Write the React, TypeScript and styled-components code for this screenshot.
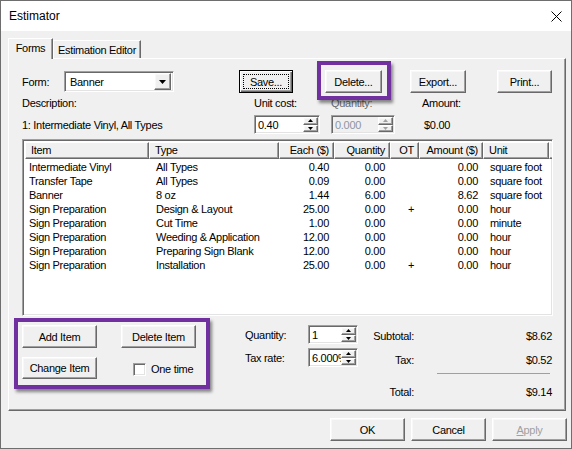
import React from 'react';
import styled, { createGlobalStyle, css } from 'styled-components';

const FONT = `"Liberation Sans", Arial, sans-serif`;

const Global = createGlobalStyle`
  html, body { margin: 0; padding: 0; background: #fff; }
  body { font-family: ${FONT}; font-size: 11px; letter-spacing: -0.3px; color: #000; }
  * { box-sizing: border-box; }
`;

const raised = css`
  border: 1px solid;
  border-color: #fff #696969 #696969 #fff;
  box-shadow: inset -1px -1px 0 #a0a0a0, inset 1px 1px 0 #f8f8f8;
`;

const sunken = css`
  border: 1px solid;
  border-color: #a0a0a0 #fff #fff #a0a0a0;
  box-shadow: inset 1px 1px 0 #696969, inset -1px -1px 0 #e3e3e3;
`;

const Window = styled.div`
  width: 572px;
  height: 449px;
  border: 1px solid #6e6e6e;
  background: #f0f0f0;
  display: flex;
  flex-direction: column;
  overflow: hidden;
`;

const TitleBar = styled.div`
  height: 30px;
  flex: none;
  background: #fff;
  display: flex;
  align-items: center;
  padding: 0 9px 0 8px;
  font-size: 12px;
  letter-spacing: 0;
`;

const Title = styled.span`
  flex: 1;
`;

const Body = styled.div`
  flex: 1;
  display: flex;
  flex-direction: column;
  padding: 7px 4px 0 7px;
`;

const TabStrip = styled.div`
  display: flex;
  height: 21px;
  margin-bottom: -1px;
  position: relative;
  z-index: 1;
`;

const Tab = styled.div<{ $active?: boolean; $w: number }>`
  width: ${(p) => p.$w}px;
  height: ${(p) => (p.$active ? 21 : 18)}px;
  margin-top: ${(p) => (p.$active ? 0 : 2)}px;
  border: 1px solid;
  border-bottom: none;
  border-color: #fff #696969 transparent #fff;
  box-shadow: inset -1px 0 0 #a0a0a0;
  background: #f0f0f0;
  display: flex;
  align-items: center;
  justify-content: center;
  padding-bottom: ${(p) => (p.$active ? 3 : 0)}px;
`;

const Panel = styled.div`
  height: 353px;
  margin-right: 1px;
  border: 1px solid;
  border-color: #fff #696969 #696969 #fff;
  box-shadow: inset -1px -1px 0 #a0a0a0;
  padding: 11px 11px 0 13px;
  display: flex;
  flex-direction: column;
`;

const TopRow = styled.div`
  display: flex;
  align-items: center;
  height: 23px;
`;

const Label = styled.span<{ $w?: number; $disabled?: boolean; $right?: boolean }>`
  ${(p) => (p.$w ? `width: ${p.$w}px; flex: none;` : '')}
  color: ${(p) => (p.$disabled ? '#6d6d6d' : '#000')};
  text-align: ${(p) => (p.$right ? 'right' : 'left')};
  white-space: nowrap;
`;

const Combo = styled.div`
  width: 110px;
  height: 21px;
  flex: none;
  background: #fff;
  ${sunken};
  display: flex;
  align-items: center;
  padding: 2px 2px 2px 5px;
`;

const ComboText = styled.span`
  flex: 1;
`;

const ComboArrow = styled.div`
  width: 17px;
  height: 17px;
  background: #f0f0f0;
  ${raised};
  display: flex;
  align-items: center;
  justify-content: center;
`;

const Annotated = styled.div<{ $ml?: number; $box: string }>`
  position: relative;
  margin-left: ${(p) => p.$ml ?? 0}px;
  flex: none;
  align-self: flex-start;
  &::after {
    content: '';
    position: absolute;
    inset: ${(p) => p.$box};
    border: 4px solid #7030a0;
    box-shadow: 2px 3px 3px rgba(0, 0, 0, 0.45);
    z-index: 3;
    pointer-events: none;
  }
`;

const Button = styled.button<{ $w: number; $h?: number; $ml?: number; $focused?: boolean; $disabled?: boolean }>`
  width: ${(p) => p.$w}px;
  height: ${(p) => p.$h ?? 23}px;
  margin-left: ${(p) => p.$ml ?? 0}px;
  flex: none;
  background: #f0f0f0;
  font-family: ${FONT};
  font-size: 11px;
  letter-spacing: -0.3px;
  color: ${(p) => (p.$disabled ? '#a0a0a0' : '#000')};
  padding: 0;
  position: relative;
  ${raised};
  ${(p) =>
    p.$focused &&
    css`
      border-color: #000;
      box-shadow: inset 1px 1px 0 #fff, inset -1px -1px 0 #696969, inset -2px -2px 0 #a0a0a0;
      &::before {
        content: '';
        position: absolute;
        inset: 3px;
        border: 1px dotted #000;
      }
    `}
`;

const InfoGrid = styled.div`
  display: grid;
  grid-template-columns: 232px 77px 91px 1fr;
  grid-template-rows: 14px 19px;
  row-gap: 5px;
  margin-top: 3px;
  align-items: center;
`;

const SpinBox = styled.div<{ $w: number; $disabled?: boolean }>`
  width: ${(p) => p.$w}px;
  height: 19px;
  background: ${(p) => (p.$disabled ? '#f0f0f0' : '#fff')};
  color: ${(p) => (p.$disabled ? '#8d96a3' : '#000')};
  ${sunken};
  display: flex;
  align-items: center;
  padding: 2px 1px 2px 3px;
  overflow: hidden;
`;

const SpinText = styled.span`
  flex: 1;
  overflow: hidden;
  white-space: nowrap;
`;

const SpinButtons = styled.div`
  width: 15px;
  height: 15px;
  display: flex;
  flex-direction: column;
  flex: none;
`;

const SpinBtn = styled.div`
  flex: 1;
  background: #f0f0f0;
  ${raised};
  display: flex;
  align-items: center;
  justify-content: center;
`;

const Amount = styled.span`
  padding-left: 2px;
`;

const List = styled.div`
  margin-top: 5px;
  width: 531px;
  height: 177px;
  background: #fff;
  ${sunken};
  padding: 2px;
  overflow: hidden;
`;

const COLS = '124px 130px 55px 56px 29px 64px 66px 1fr';

const HeaderRow = styled.div`
  display: grid;
  grid-template-columns: ${COLS};
  height: 17px;
`;

const HeaderCell = styled.div<{ $right?: boolean }>`
  background: #f0f0f0;
  border: 1px solid;
  border-color: #fff #696969 #696969 #fff;
  box-shadow: inset -1px -1px 0 #a0a0a0;
  display: flex;
  align-items: center;
  justify-content: ${(p) => (p.$right ? 'flex-end' : 'flex-start')};
  padding: 0 4px 1px 5px;
  white-space: nowrap;
  overflow: hidden;
`;

const Rows = styled.div`
  padding-top: 1px;
`;

const DataRow = styled.div`
  display: grid;
  grid-template-columns: ${COLS};
  height: 14px;
  line-height: 14px;
`;

const Cell = styled.div<{ $right?: boolean; $first?: boolean }>`
  text-align: ${(p) => (p.$right ? 'right' : 'left')};
  padding: ${(p) => (p.$right ? '0 5px 0 0' : p.$first ? '0 0 0 4px' : '0 0 0 7px')};
  white-space: nowrap;
  overflow: hidden;
`;

const BottomArea = styled.div`
  display: flex;
  align-items: flex-start;
  padding-top: 9px;
`;

const ItemButtons = styled.div`
  display: grid;
  grid-template-columns: 75px 75px;
  grid-template-rows: 23px 22px;
  column-gap: 24px;
  row-gap: 9px;
`;

const CheckRow = styled.label`
  display: flex;
  align-items: center;
  gap: 5px;
  padding-left: 12px;
  padding-top: 2px;
`;

const CheckBox = styled.span`
  width: 13px;
  height: 13px;
  background: #fff;
  ${sunken};
`;

const QtyGrid = styled.div`
  margin-left: 49px;
  display: grid;
  grid-template-columns: 63px 50px;
  grid-template-rows: 19px 19px;
  row-gap: 4px;
  align-items: center;
`;

const Totals = styled.div`
  margin-left: 7px;
  width: 187px;
  display: grid;
  grid-template-columns: 49px 1fr;
  grid-template-rows: 22px 26px 1px 35px;
  align-items: center;
`;

const TotalValue = styled.span`
  text-align: right;
`;

const Separator = styled.div`
  grid-column: 2;
  height: 1px;
  background: #a0a0a0;
  margin: 0 2px 0 23px;
`;

const Footer = styled.div`
  display: flex;
  justify-content: flex-end;
  gap: 6px;
  padding-top: 7px;
`;

const Underline = styled.span`
  text-decoration: underline;
`;

const TriDown = ({ w = 7, h = 4 }: { w?: number; h?: number }) => (
  <svg width={w} height={h} viewBox={`0 0 ${w} ${h}`}>
    <polygon points={`0,0 ${w},0 ${w / 2},${h}`} fill="#000" />
  </svg>
);

const TriUp = ({ w = 5, h = 3, color = '#000' }: { w?: number; h?: number; color?: string }) => (
  <svg width={w} height={h} viewBox={`0 0 ${w} ${h}`}>
    <polygon points={`0,${h} ${w},${h} ${w / 2},0`} fill={color} />
  </svg>
);

const TriDownSmall = ({ color = '#000' }: { color?: string }) => (
  <svg width={5} height={3} viewBox="0 0 5 3">
    <polygon points="0,0 5,0 2.5,3" fill={color} />
  </svg>
);

const Spin = ({ value, w, disabled }: { value: string; w: number; disabled?: boolean }) => {
  const c = disabled ? '#a0a0a0' : '#000';
  return (
    <SpinBox $w={w} $disabled={disabled}>
      <SpinText>{value}</SpinText>
      <SpinButtons>
        <SpinBtn>
          <TriUp color={c} />
        </SpinBtn>
        <SpinBtn>
          <TriDownSmall color={c} />
        </SpinBtn>
      </SpinButtons>
    </SpinBox>
  );
};

type Col = { label: string; right?: boolean };
const columns: Col[] = [
  { label: 'Item' },
  { label: 'Type' },
  { label: 'Each ($)', right: true },
  { label: 'Quantity', right: true },
  { label: 'OT', right: true },
  { label: 'Amount ($)', right: true },
  { label: 'Unit' },
  { label: '' },
];

const rows: string[][] = [
  ['Intermediate Vinyl', 'All Types', '0.40', '0.00', '', '0.00', 'square foot'],
  ['Transfer Tape', 'All Types', '0.09', '0.00', '', '0.00', 'square foot'],
  ['Banner', '8 oz', '1.44', '6.00', '', '8.62', 'square foot'],
  ['Sign Preparation', 'Design & Layout', '25.00', '0.00', '+', '0.00', 'hour'],
  ['Sign Preparation', 'Cut Time', '1.00', '0.00', '', '0.00', 'minute'],
  ['Sign Preparation', 'Weeding & Application', '12.00', '0.00', '', '0.00', 'hour'],
  ['Sign Preparation', 'Preparing Sign Blank', '12.00', '0.00', '', '0.00', 'hour'],
  ['Sign Preparation', 'Installation', '25.00', '0.00', '+', '0.00', 'hour'],
];

export default function App() {
  return (
    <>
      <Global />
      <Window>
        <TitleBar>
          <Title>Estimator</Title>
          <svg width="11" height="11" viewBox="0 0 11 11">
            <path d="M0.5 0.5 L10.5 10.5 M10.5 0.5 L0.5 10.5" stroke="#000" strokeWidth="1" />
          </svg>
        </TitleBar>
        <Body>
          <TabStrip>
            <Tab $active $w={45}>Forms</Tab>
            <Tab $w={88}>Estimation Editor</Tab>
          </TabStrip>
          <Panel>
            <TopRow>
              <Label $w={42}>Form:</Label>
              <Combo>
                <ComboText>Banner</ComboText>
                <ComboArrow>
                  <TriDown />
                </ComboArrow>
              </Combo>
              <Button $w={54} $ml={65} $focused>
                Save...
              </Button>
              <Annotated $ml={32} $box="-9px -9px -7px -8px">
                <Button $w={57}>Delete...</Button>
              </Annotated>
              <Button $w={56} $ml={28}>
                Export...
              </Button>
              <Button $w={55} $ml={31}>
                Print...
              </Button>
            </TopRow>
            <InfoGrid>
              <Label>Description:</Label>
              <Label>Unit cost:</Label>
              <Label $disabled>Quantity:</Label>
              <Label>Amount:</Label>
              <Label>1: Intermediate Vinyl, All Types</Label>
              <Spin value="0.40" w={66} />
              <Spin value="0.000" w={64} disabled />
              <Amount>$0.00</Amount>
            </InfoGrid>
            <List>
              <HeaderRow>
                {columns.map((c, i) => (
                  <HeaderCell key={i} $right={c.right}>
                    {c.label}
                  </HeaderCell>
                ))}
              </HeaderRow>
              <Rows>
                {rows.map((r, ri) => (
                  <DataRow key={ri}>
                    {r.map((v, ci) => (
                      <Cell key={ci} $right={columns[ci].right} $first={ci === 0}>
                        {v}
                      </Cell>
                    ))}
                  </DataRow>
                ))}
              </Rows>
            </List>
            <BottomArea>
              <Annotated $box="-7px -14px -10px -8px">
                <ItemButtons>
                  <Button $w={75}>Add Item</Button>
                  <Button $w={75}>Delete Item</Button>
                  <Button $w={75} $h={22}>
                    Change Item
                  </Button>
                  <CheckRow>
                    <CheckBox />
                    One time
                  </CheckRow>
                </ItemButtons>
              </Annotated>
              <QtyGrid>
                <Label>Quantity:</Label>
                <Spin value="1" w={50} />
                <Label>Tax rate:</Label>
                <Spin value="6.000%" w={50} />
              </QtyGrid>
              <Totals>
                <Label $right>Subtotal:</Label>
                <TotalValue>$8.62</TotalValue>
                <Label $right>Tax:</Label>
                <TotalValue>$0.52</TotalValue>
                <Separator />
                <Label $right>Total:</Label>
                <TotalValue>$9.14</TotalValue>
              </Totals>
            </BottomArea>
          </Panel>
          <Footer>
            <Button $w={75}>OK</Button>
            <Button $w={75}>Cancel</Button>
            <Button $w={75} $disabled>
              <Underline>A</Underline>pply
            </Button>
          </Footer>
        </Body>
      </Window>
    </>
  );
}
